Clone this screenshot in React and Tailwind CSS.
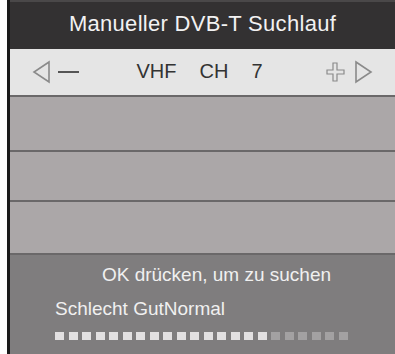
export default function App() {
  const bars = Array.from({ length: 22 }, (_, i) => i < 16)

  return (
    <div
      className="w-[395px] h-[354px] bg-white pl-[7px] overflow-hidden"
      style={{ fontFamily: '"Liberation Sans", Arial, sans-serif' }}
    >
      <div className="h-full border-l-[3px] border-[#1a1a1a] flex flex-col">
        {/* Title */}
        <div className="h-[49px] bg-[#333132] border-t-2 border-[#4a4849] flex items-center justify-center">
          <span className="text-[22px] tracking-[0.3px] text-[#f2f2f2] leading-none pb-[3px]">
            Manueller DVB-T Suchlauf
          </span>
        </div>

        {/* Channel row */}
        <div className="h-[48px] bg-[#e5e5e5] border-b-2 border-[#6a6869] flex items-center px-[22px]">
          <svg width="20" height="24" viewBox="0 0 20 24" className="shrink-0">
            <path d="M17 2 L2 12 L17 22 Z" fill="none" stroke="#8a8a8a" strokeWidth="1.6" />
          </svg>
          <div className="w-[21px] h-[2px] bg-[#555] ml-[6px]" />
          <div className="flex-1 flex justify-center gap-[23px] text-[20px] text-[#333] leading-none pr-[6px] pb-[2px]">
            <span>VHF</span>
            <span>CH</span>
            <span>7</span>
          </div>
          <svg width="19" height="20" viewBox="0 0 19 20" className="shrink-0">
            <path d="M7 1 H11 V8 H18 V12 H11 V19 H7 V12 H1 V8 H7 Z" fill="none" stroke="#8a8a8a" strokeWidth="1.2" />
          </svg>
          <svg width="20" height="24" viewBox="0 0 20 24" className="shrink-0 ml-[8px]">
            <path d="M3 2 L18 12 L3 22 Z" fill="none" stroke="#8a8a8a" strokeWidth="1.6" />
          </svg>
        </div>

        {/* Empty list rows */}
        <div className="h-[55px] bg-[#aba7a8] border-b-2 border-[#6a6869]" />
        <div className="h-[50px] bg-[#aba7a8] border-b-2 border-[#6a6869]" />
        <div className="h-[53px] bg-[#aba7a8] border-b-2 border-[#6a6869]" />

        {/* Bottom panel */}
        <div className="flex-1 bg-[#7f7d7e] pl-[45px] pt-[10px]">
          <div className="text-[19px] text-[#f0f0f0] leading-none text-center pr-[17px]">
            OK drücken, um zu suchen
          </div>
          <div className="text-[19px] text-[#f0f0f0] leading-none mt-[15px]">
            Schlecht GutNormal
          </div>
          <div className="flex gap-[4.5px] mt-[14px]">
            {bars.map((on, i) => (
              <div
                key={i}
                className={on ? 'w-[9px] h-[8px] bg-[#e2e0e1]' : 'w-[9px] h-[8px] bg-[#a3a1a2]'}
              />
            ))}
          </div>
        </div>
      </div>
    </div>
  )
}
